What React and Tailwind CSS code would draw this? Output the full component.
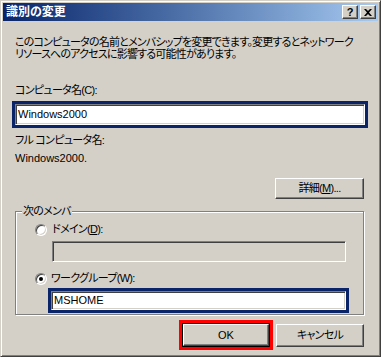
import React from "react";

const font = "font-['Liberation_Sans','Noto_Sans_CJK_JP',sans-serif] [font-feature-settings:'palt']";
const jp = "tracking-[-0.7px]";

function Btn({ children, className = "" }) {
  return (
    <div
      className={`flex items-center justify-center bg-[#d4d0c8] border border-t-white border-l-white border-b-[#404040] border-r-[#404040] shadow-[inset_-1px_-1px_#808080] text-black ${className}`}
    >
      {children}
    </div>
  );
}

function Sunken({ children, className = "", bg = "bg-white" }) {
  return (
    <div
      className={`flex items-center border border-t-[#808080] border-l-[#808080] border-b-white border-r-white shadow-[inset_1px_1px_#404040,inset_-1px_-1px_#d4d0c8] ${bg} ${className}`}
    >
      {children}
    </div>
  );
}

function Radio({ checked }) {
  return (
    <div className="w-3 h-3 rounded-full bg-white border border-t-[#808080] border-l-[#808080] border-b-white border-r-white shadow-[inset_1px_1px_#404040,inset_-1px_-1px_#d4d0c8] flex items-center justify-center">
      {checked && <div className="w-1 h-1 rounded-full bg-black" />}
    </div>
  );
}

export default function App() {
  return (
    <div className={`w-[381px] h-[357px] bg-[#d4d0c8] text-black ${font} text-[11px] leading-[13px]`}>
      <div className="w-full h-full border border-t-[#d4d0c8] border-l-[#d4d0c8] border-b-[#404040] border-r-[#404040] shadow-[inset_1px_1px_white,inset_-1px_-1px_#808080] p-[2px] flex flex-col">
        {/* title bar */}
        <div className="h-[18px] flex items-center justify-between bg-gradient-to-r from-[#0a246a] to-[#a6caf0] pl-[3px] pr-[2px]">
          <span className="text-white font-bold text-[12px] leading-[14px]">識別の変更</span>
          <div className="flex gap-[2px]">
            <Btn className="w-4 h-[14px] font-bold text-[11px] leading-none">?</Btn>
            <Btn className="w-4 h-[14px]">
              <svg width="8" height="7" viewBox="0 0 8 7">
                <path d="M0 0h2l2 2 2-2h2L5 3.5 8 7H6L4 5 2 7H0l3-3.5z" fill="black" />
              </svg>
            </Btn>
          </div>
        </div>

        {/* content */}
        <div className="flex flex-col pl-[9px] pr-[13px]">
          <p className="mt-[15px] ml-[3px] text-[11px] leading-[12px] tracking-[-0.8px] whitespace-nowrap">
            このコンピュータの名前とメンバシップを変更できます。変更するとネットワーク
            <br />
            リソースへのアクセスに影響する可能性があります。
          </p>

          <div className={`mt-[24px] ml-[3px] ${jp}`}>コンピュータ名(C):</div>
          <div className="mt-[4px] border-[3px] border-[#0a246a] h-[27px] w-[356px]">
            <Sunken className="h-full w-full pl-[2px]">Windows2000</Sunken>
          </div>
          <div className={`mt-[6px] ml-[3px] ${jp}`}>フル コンピュータ名:</div>
          <div className="mt-[5px] ml-[3px]">Windows2000.</div>

          <div className="flex justify-end mt-[13px] pr-[1px]">
            <Btn className={`w-[89px] h-[21px] ${jp}`}>
              詳細(<span className="underline">M</span>)...
            </Btn>
          </div>

          {/* group box */}
          <div className="relative mt-[12px] ml-[3px] w-[349px] h-[104px] border border-[#808080] shadow-[inset_1px_1px_white,1px_1px_white] pt-[11px] pl-[19px]">
            <span className={`absolute -top-[7px] left-[6px] bg-[#d4d0c8] px-[1px] ${jp}`}>次のメンバ</span>
            <div className="flex items-center gap-[5px]">
              <Radio />
              <span className={jp}>
                ドメイン(<span className="underline">D</span>):
              </span>
            </div>
            <Sunken bg="bg-[#d4d0c8]" className="ml-[17px] mt-[5px] w-[294px] h-[21px]" />
            <div className="flex items-center gap-[4px] mt-[10px]">
              <Radio checked />
              <span className={jp}>ワークグループ(W):</span>
            </div>
            <div className="ml-[13px] mt-[3px] border-[3px] border-[#0a246a] w-[301px] h-[25px]">
              <Sunken className="h-full w-full pl-[2px]">MSHOME</Sunken>
            </div>
          </div>

          {/* buttons */}
          <div className="flex justify-end items-center gap-[3px] mt-[5px] pr-[1px]">
            <div className="border-[3px] border-[#ff0000] p-0">
              <div className="border border-black">
                <Btn className="w-[86px] h-[22px]">OK</Btn>
              </div>
            </div>
            <Btn className={`w-[88px] h-[23px] ${jp}`}>キャンセル</Btn>
          </div>
        </div>
      </div>
    </div>
  );
}
